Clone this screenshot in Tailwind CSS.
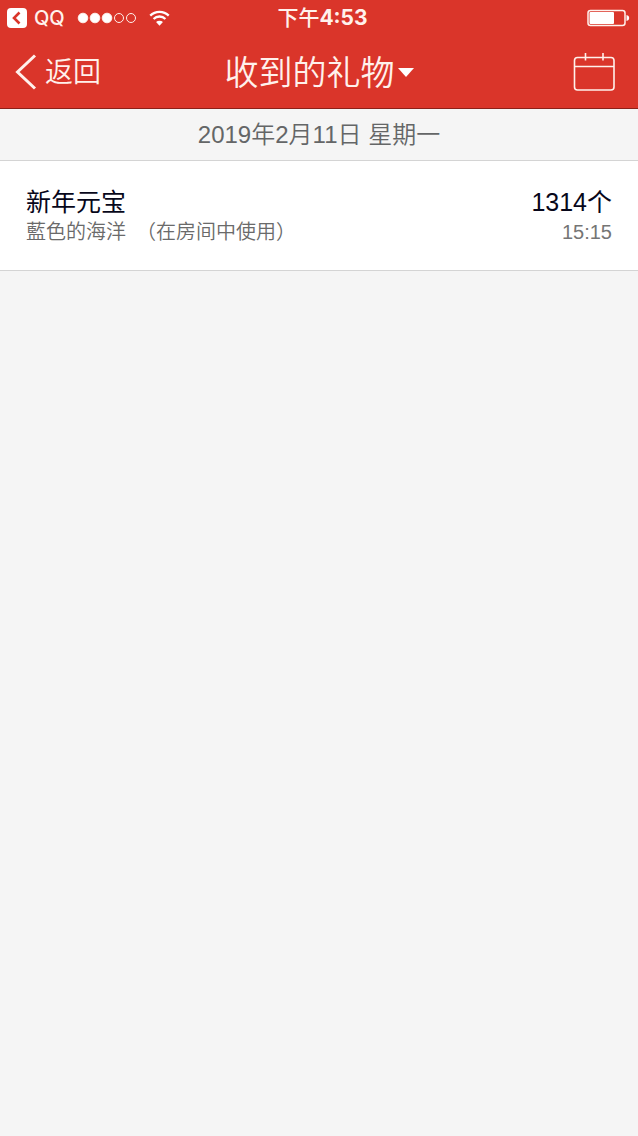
<!DOCTYPE html>
<html lang="zh-CN">
<head>
  <meta charset="UTF-8">
  <meta name="viewport" content="width=device-width, initial-scale=1.0">
  <title>收到的礼物</title>
  <script src="https://cdn.jsdelivr.net/npm/@tailwindcss/browser@4"></script>
</head>
<body class="min-h-screen bg-[#f5f5f5] font-['Liberation_Sans','Noto_Sans_CJK_SC',sans-serif]">

  <header class="bg-[#da352a] text-[#fff1ec] border-b border-[#8c2019]">
    <!-- 状态栏 -->
    <div class="grid grid-cols-[1fr_auto_1fr] items-center h-9 pl-[7px] pr-2">
      <div class="flex items-center">
        <a href="#" class="flex items-center font-[Inter,sans-serif] text-xl leading-7 font-medium">
          <svg class="mr-[7px]" width="20" height="20" viewBox="0 0 20 20" fill="none">
            <rect width="20" height="20" rx="4" fill="#fff"/>
            <path d="M12.500 4.500 7 10l5.500 5.500" stroke="#da352a" stroke-width="2.600"/>
          </svg>
          QQ
        </a>
        <svg class="ml-3" width="60" height="12" viewBox="0 0 60 12" fill="#fff" stroke="#fff1ec">
          <circle cx="6" cy="6" r="4.800"/>
          <circle cx="18" cy="6" r="4.800"/>
          <circle cx="30" cy="6" r="4.800"/>
          <circle cx="42" cy="6" r="4.500" fill="none"/>
          <circle cx="54" cy="6" r="4.500" fill="none"/>
        </svg>
        <svg class="ml-3" width="21" height="16" viewBox="0 0 22 16" fill="none" stroke="#fff" stroke-width="2.400">
          <path d="M1.300 5.500a13.700 13.700 0 0 1 19.400 0"/>
          <path d="M4.800 9a8.800 8.800 0 0 1 12.400 0"/>
          <path d="M11 16 7.400 12.300a5.200 5.200 0 0 1 7.200 0z" fill="#fff" stroke="none"/>
        </svg>
      </div>
      <div class="pl-2 font-[Inter,'Noto_Sans_CJK_SC',sans-serif] text-[21px] leading-7 font-bold">
        <span class="font-medium">下午</span>4:53
      </div>
      <svg class="justify-self-end" width="43" height="18" viewBox="0 0 43 18" fill="#fff">
        <rect x="1" y="1.500" width="37" height="15" rx="2.500" fill="none" stroke="#fff1ec" stroke-width="1.500"/>
        <rect x="2.500" y="3" width="24.500" height="12" rx="1"/>
        <path d="M39.500 6c1.700.4 2.700 1.500 2.700 3s-1 2.600-2.700 3z"/>
      </svg>
    </div>

    <!-- 导航栏 -->
    <nav class="grid grid-cols-[1fr_auto_1fr] items-center h-[72px] px-[15px]">
      <a href="#" class="flex items-center gap-2 text-[28px] font-[350]">
        <svg width="22" height="36" viewBox="0 0 22 36" fill="none" stroke="#fff1ec" stroke-width="3">
          <path d="M20 1.500 2.500 18 20 34.500"/>
        </svg>
        <span class="pt-0.5">返回</span>
      </a>
      <button type="button" class="flex items-center gap-[3px] text-[34px] font-[350]">
        <span class="pt-0.5">收到的礼物</span>
        <svg width="16" height="9" viewBox="0 0 16 9" fill="#fff"><path d="M0 0h16L8 9z"/></svg>
      </button>
      <button type="button" aria-label="选择日期" class="justify-self-end mr-[7px]">
        <svg width="43" height="38" viewBox="0 0 43 38" fill="none" stroke="#fff1ec" stroke-width="1.600">
          <rect x="1.500" y="4.500" width="39.500" height="32.500" rx="3"/>
          <path d="M1.500 13.500H41M12.500 0v7.500M30 0v7.500"/>
        </svg>
      </button>
    </nav>
  </header>

  <main>
    <h2 class="flex items-center justify-center h-[52px] border-b border-[#d4d4d4] text-2xl font-[350] text-[#646667]">2019年2月11日 星期一</h2>

    <!-- 礼物记录 -->
    <ul>
      <li class="flex justify-between bg-white border-b border-[#d4d4d4] px-[26px] pt-[25px] pb-6">
        <div>
          <p class="text-[25px] leading-8 text-[#07071a]">新年元宝</p>
          <p class="flex gap-2.5 text-xl leading-7 font-[350] text-[#6a6a6a]">
            <span>藍色的海洋</span><span>（在房间中使用）</span>
          </p>
        </div>
        <div class="text-right">
          <p class="text-[25px] leading-8 text-[#07071a]">1314个</p>
          <p class="text-xl leading-7 text-[#757575]">15:15</p>
        </div>
      </li>
    </ul>
  </main>

</body>
</html>
